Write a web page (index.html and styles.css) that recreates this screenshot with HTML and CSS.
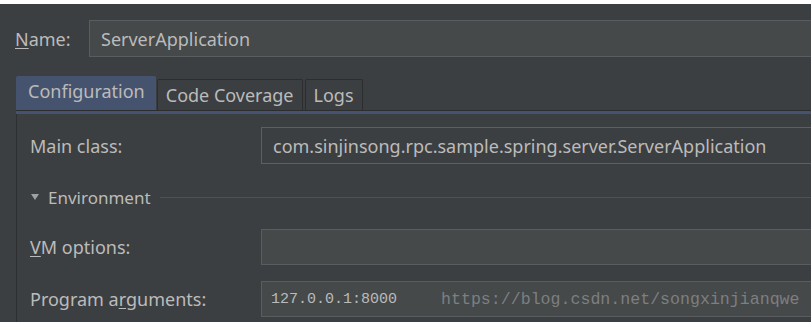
FILE: index.html
```html
<!DOCTYPE html>
<html>
<head>
<meta charset="utf-8">
<link rel="stylesheet" href="styles.css">
</head>
<body>
<div class="strip"></div>
<div class="name-row">
  <span class="label name-label"><u>N</u>ame:</span>
  <div class="field edit"><span class="val">ServerApplication</span></div>
</div>
<div class="tabs">
  <div class="tab active">Configuration</div>
  <div class="tab">Code Coverage</div>
  <div class="tab">Logs</div>
</div>
<div class="tabline"></div>
<div class="panel">
  <div class="row main-row">
    <span class="label">Main class:</span>
    <div class="field plain"><span class="val">com.sinjinsong.rpc.sample.spring.server.ServerApplication</span></div>
  </div>
  <div class="env">
    <span class="tri"></span>
    <span class="label">Environment</span>
    <span class="sep"></span>
  </div>
  <div class="row vm-row">
    <span class="label"><u>V</u>M options:</span>
    <div class="field edit"></div>
  </div>
  <div class="row args-row">
    <span class="label">Program a<u>r</u>guments:</span>
    <div class="field edit"><span class="mono">127.0.0.1:8000</span><span class="wm">https://blog.csdn.net/songxinjianqwe</span></div>
  </div>
</div>
</body>
</html>
```
FILE: styles.css
```css
html, body {
  margin: 0;
  padding: 0;
  background: #3c3f41;
  overflow: hidden;
  height: 322px;
}
body {
  font-family: "Noto Sans", "Open Sans", sans-serif;
  font-size: 18px;
  color: #bbbbbb;
}
u { text-decoration: underline; text-underline-offset: 2px; }
.strip { height: 4px; background: #ffffff; }
.name-row {
  display: flex;
  align-items: center;
  margin-top: 16px;
  height: 37px;
}
.name-label { margin-left: 15px; width: 74px; flex: none; }
.field {
  flex: 1;
  height: 37px;
  box-sizing: border-box;
  border: 1px solid #5a5d5f;
  border-right: none;
  display: flex;
  align-items: center;
  white-space: nowrap;
  overflow: hidden;
}
.field.edit { background: #45494a; }
.field.plain { background: #3c3f41; border-color: #5e6060; }
.val { margin-left: 11px; }
.tabs {
  display: flex;
  align-items: flex-end;
  margin-top: 19px;
  margin-left: 16px;
  height: 34px;
}
.tab {
  height: 31px;
  box-sizing: border-box;
  border: 1px solid #2b2d2e;
  border-bottom: none;
  border-radius: 2px 2px 0 0;
  padding: 0 8px;
  display: flex;
  align-items: center;
  margin-right: 2px;
  background: #3c3f41;
  color: #bbbbbb;
}
.tab.active {
  height: 34px;
  background: #46536e;
  border-color: #46536e;
  padding: 2px 10px 0 11px;
  margin-right: 1px;
  align-items: flex-start;
}
.tabline {
  margin-left: 16px;
  height: 4px;
  background: #46536e;
  border-top: 1px solid #2b2d2e;
  box-sizing: border-box;
}
.panel {
  margin-left: 16px;
  border-left: 1px solid #2d2f30;
  padding-top: 13px;
  height: 208px;
  box-sizing: border-box;
}
.row {
  display: flex;
  align-items: center;
  height: 37px;
}
.row .label { width: 231px; margin-left: 13px; flex: none; }
.env {
  display: flex;
  align-items: center;
  height: 20px;
  margin-top: 23px;
  margin-left: 13px;
}
.tri {
  width: 0; height: 0;
  border-left: 4px solid transparent;
  border-right: 4px solid transparent;
  border-top: 6px solid #a0a0a0;
  margin-left: 1px;
  margin-right: 9px;
}
.env .label { font-size: 17px; }
.sep {
  flex: 1;
  height: 1px;
  background: #4f5254;
  margin-left: 9px;
}
.vm-row { margin-top: 22px; height: 36px; }
.vm-row .field { height: 36px; }
.args-row { margin-top: 16px; height: 36px; }
.args-row .field { height: 36px; }
.mono {
  font-family: "Liberation Mono", monospace;
  font-size: 15px;
  margin-left: 9px;
  color: #bbbbbb;
}
.wm {
  font-family: "Liberation Mono", monospace;
  font-size: 16.6px;
  color: #7d7f80;
  margin-left: 44px;
}
```
